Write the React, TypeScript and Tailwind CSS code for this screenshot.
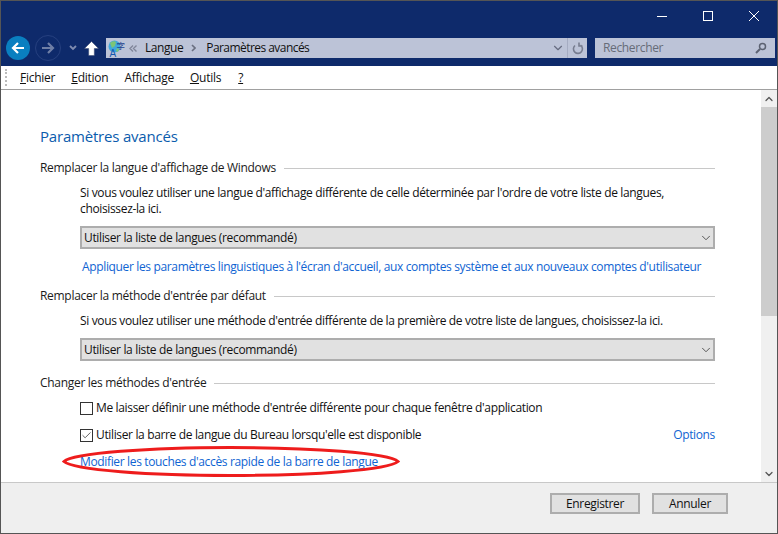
import { ChevronDown, Check } from "lucide-react";

const font = "font-['Open_Sans','Noto_Sans',sans-serif]";

function SectionTitle({ children }: { children: string }) {
  return (
    <div className="flex items-center gap-[8px] h-[16px] text-[12px] text-[#1a1a1a]">
      <span className="whitespace-nowrap tracking-[-0.3px]">{children}</span>
      <div className="flex-1 h-px bg-[#c8c8c8]" />
    </div>
  );
}

function Select() {
  return (
    <div className="flex items-center justify-between h-[23px] border-2 border-[#adadad] bg-[#e1e1e1] pl-[2px] text-[12px] text-[#111] tracking-[-0.35px]">
      <span>Utiliser la liste de langues (recommandé)</span>
      <ChevronDown size={14} strokeWidth={1.5} className="text-[#444]" />
    </div>
  );
}

function Checkbox({ checked }: { checked?: boolean }) {
  return (
    <div className="w-[13px] h-[13px] border border-[#333] bg-white flex items-center justify-center shrink-0">
      {checked && <Check size={11} strokeWidth={1.8} className="text-[#444]" />}
    </div>
  );
}

export default function App() {
  return (
    <div className={`w-[778px] h-[534px] flex flex-col border border-[#555] bg-white overflow-hidden ${font}`}>
      {/* title + nav */}
      <div className="h-[65px] bg-[#0e2a6b] flex flex-col shrink-0">
        <div className="flex justify-end h-[30px] text-white">
          <div className="w-[46px] flex items-center justify-center pt-[1px]">
            <div className="w-[10px] h-px bg-white" />
          </div>
          <div className="w-[46px] flex items-center justify-center">
            <div className="w-[10px] h-[10px] border border-white" />
          </div>
          <div className="w-[46px] flex items-center justify-center">
            <svg width="10" height="10" viewBox="0 0 10 10" stroke="#fff" fill="none"><path d="M0 0l10 10M10 0L0 10" /></svg>
          </div>
        </div>
        <div className="flex items-center h-[28px] mt-[3px]">
          <div className="ml-[5px] w-[24px] h-[24px] rounded-full bg-[#0a7fc0] flex items-center justify-center">
            <svg width="14" height="12" viewBox="0 0 14 12" fill="none" stroke="#fff" strokeWidth="2.2"><path d="M13 6H2M7 1L2 6l5 5" /></svg>
          </div>
          <div className="ml-[5px] w-[26px] h-[26px] rounded-full border border-[#26407f] flex items-center justify-center">
            <svg width="14" height="12" viewBox="0 0 14 12" fill="none" stroke="#6f7fa6" strokeWidth="2.2"><path d="M1 6h11M7 1l5 5-5 5" /></svg>
          </div>
          <svg className="ml-[8px]" width="8" height="6" viewBox="0 0 8 6" fill="none" stroke="#7f8cb0" strokeWidth="1.8"><path d="M1 1l3 3 3-3" /></svg>
          <svg className="ml-[7px]" width="15" height="15" viewBox="0 0 15 15" fill="#fff" stroke="#3d4a70" strokeWidth="0.5"><path d="M7.500 .5L14.500 7.500H10.300V14.500H4.700V7.500H.5z" /></svg>
          <div className="ml-[7px] w-[481px] h-[20px] bg-[#bcc3d7] flex items-center text-[12px] text-[#111] tracking-[-0.45px]">
            <svg className="ml-[2px]" width="17" height="17" viewBox="0 0 17 17">
              <circle cx="6.500" cy="6.500" r="6" fill="#3fa7dc" />
              <path d="M2 3c2-2 5-2 6-1L7 6 4 8z" fill="#7cc576" />
              <path d="M9 8l2 1-1 3-2-1z" fill="#7cc576" />
              <text x="1.500" y="16.500" fontSize="10" fill="#1558b0" fontFamily="'Liberation Sans',sans-serif">A</text>
              <text x="8.500" y="9" fontSize="8.500" fill="#1f4590" fontFamily="'Noto Sans CJK SC',sans-serif">字</text>
            </svg>
            <svg className="ml-[4px]" width="8" height="7" viewBox="0 0 8 7" fill="none" stroke="#80869a" strokeWidth="1.400"><path d="M4 .5L1 3.500l3 3M7.500 .5l-3 3 3 3" /></svg>
            <span className="ml-[8px]">Langue</span>
            <svg className="ml-[8px]" width="5" height="8" viewBox="0 0 5 8" fill="none" stroke="#6a6f80" strokeWidth="1.600"><path d="M1 1l3 3-3 3" /></svg>
            <span className="ml-[10px] tracking-[-0.55px]">Paramètres avancés</span>
            <div className="flex-1" />
            <ChevronDown size={14} strokeWidth={2} className="text-[#666c80] mr-[2px]" />
            <div className="w-px h-full bg-[#a5acc2]" />
            <svg className="ml-[4px] mr-[3px]" width="12" height="13" viewBox="0 0 12 13" fill="none" stroke="#777d90" strokeWidth="1.600"><path d="M8.500 3.200A4.500 4.500 0 1 1 3 3.500M7 .5v3.500h3.500" /></svg>
          </div>
          <div className="ml-[8px] w-[180px] h-[20px] bg-[#bcc3d7] flex items-center justify-between pl-[8px] pr-[8px] text-[12px] text-[#666c78] tracking-[-0.35px]">
            <span>Rechercher</span>
            <svg width="12" height="12" viewBox="0 0 12 12" fill="none" stroke="#5c6272"><circle cx="7.500" cy="4.500" r="3" strokeWidth="1.500" /><path d="M5 7l-4 4" strokeWidth="2" /></svg>
          </div>
        </div>
      </div>

      {/* menu */}
      <div className="h-[24px] shrink-0 border-b border-[#a0a0a0] flex items-center text-[12px] text-[#111] tracking-[-0.25px] gap-[16px] pl-[19px] relative">
        <span className="absolute left-[4px] top-[3px] h-[17px] w-[2px] border-l-2 border-dotted border-[#bbb]" />
        <span><u>F</u>ichier</span>
        <span><u>E</u>dition</span>
        <span>Afficha<u>g</u>e</span>
        <span><u>O</u>utils</span>
        <span className="ml-[1px]"><u>?</u></span>
      </div>

      {/* content */}
      <div className="flex-1 flex min-h-0 relative">
        <div className="flex-1 pl-[39px] pr-[46px] pt-[36px]">
          <h1 className="text-[15px] leading-[20px] text-[#0b5cad] tracking-[-0.2px]">Paramètres avancés</h1>

          <div className="mt-[14px]"><SectionTitle>Remplacer la langue d'affichage de Windows</SectionTitle></div>
          <div className="pl-[40px]">
            <p className="mt-[9px] text-[12px] leading-[16px] text-[#111] tracking-[-0.35px]">
              Si vous voulez utiliser une langue d'affichage différente de celle déterminée par l'ordre de votre liste de langues, choisissez-la ici.
            </p>
            <div className="mt-[9px]"><Select /></div>
            <div className="mt-[10px] pl-[2px] text-[12px] leading-[16px] text-[#0f64d2] tracking-[-0.35px] whitespace-nowrap">
              Appliquer les paramètres linguistiques à l'écran d'accueil, aux comptes système et aux nouveaux comptes d'utilisateur
            </div>
          </div>

          <div className="mt-[13px]"><SectionTitle>Remplacer la méthode d'entrée par défaut</SectionTitle></div>
          <div className="pl-[40px]">
            <p className="mt-[9px] text-[12px] leading-[16px] text-[#111] tracking-[-0.35px]">
              Si vous voulez utiliser une méthode d'entrée différente de la première de votre liste de langues, choisissez-la ici.
            </p>
            <div className="mt-[9px]"><Select /></div>
          </div>

          <div className="mt-[14px]"><SectionTitle>Changer les méthodes d'entrée</SectionTitle></div>
          <div className="pl-[40px] text-[12px] leading-[16px] text-[#111] tracking-[-0.35px]">
            <div className="mt-[9px] flex items-center gap-[3px]">
              <Checkbox />
              <span>Me laisser définir une méthode d'entrée différente pour chaque fenêtre d'application</span>
            </div>
            <div className="mt-[11px] flex items-center gap-[3px]">
              <Checkbox checked />
              <span>Utiliser la barre de langue du Bureau lorsqu'elle est disponible</span>
              <span className="ml-auto text-[#0f64d2]">Options</span>
            </div>
            <div className="mt-[11px] text-[#0f64d2]">Modifier les touches d'accès rapide de la barre de langue</div>
          </div>
        </div>

        {/* scrollbar */}
        <div className="w-[16px] shrink-0 bg-[#f0f0f0] flex flex-col">
          <div className="h-[17px] flex items-center justify-center">
            <ChevronDown size={12} strokeWidth={2.5} className="text-[#555] rotate-180" />
          </div>
          <div className="h-[209px] bg-[#cdcdcd]" />
          <div className="flex-1" />
          <div className="h-[17px] flex items-center justify-center">
            <ChevronDown size={12} strokeWidth={2.5} className="text-[#555]" />
          </div>
        </div>

        {/* red hand-drawn ellipse */}
        <svg className="absolute left-[60px] top-[355px] pointer-events-none" width="342" height="34" viewBox="0 0 342 34" fill="none">
          <path d="M3 16.500C12 8 90 2.500 169 2.500C250 2.500 328 8 337 16.500C328 25 250 30.500 169 30.500C90 30.500 12 25 3 16.500Z" stroke="#ee1c1c" strokeWidth="3" />
        </svg>
      </div>

      {/* footer */}
      <div className="h-[51px] shrink-0 border-t border-[#c8c8c8] bg-[#efefef] flex items-start justify-end pt-[10px] pr-[49px] gap-[12px] text-[12px] text-[#111] tracking-[-0.35px]">
        <div className="w-[90px] h-[21px] border-2 border-[#adadad] bg-[#e1e1e1] flex items-center justify-center">Enregistrer</div>
        <div className="w-[76px] h-[21px] border-2 border-[#adadad] bg-[#e1e1e1] flex items-center justify-center">Annuler</div>
      </div>
    </div>
  );
}
